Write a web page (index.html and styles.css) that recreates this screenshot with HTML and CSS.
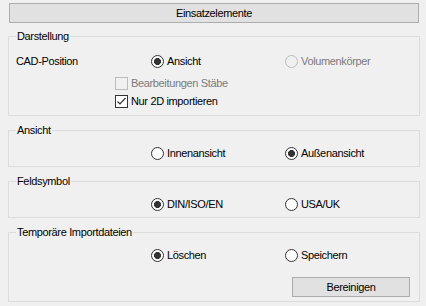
FILE: index.html
```html
<!DOCTYPE html>
<html lang="de">
<head>
    <meta charset="UTF-8">
    <meta name="viewport" content="width=device-width, initial-scale=1.0">
    <title>Import-Einstellungen</title>
    <link rel="stylesheet" href="styles.css">
</head>
<body>
    <button class="wide-btn">Einsatzelemente</button>

    <fieldset class="group group-view">
        <legend>Darstellung</legend>
        <div class="row">
            <span class="row-label">CAD-Position</span>
            <label class="opt"><span class="radio checked"></span>Ansicht</label>
            <label class="opt disabled"><span class="radio"></span>Volumenkörper</label>
        </div>
        <div class="row row-check row-gap">
            <label class="opt disabled"><span class="check"></span>Bearbeitungen Stäbe</label>
        </div>
        <div class="row row-check">
            <label class="opt"><span class="check checked">
                <svg width="11" height="11" viewBox="0 0 11 11"><polyline points="1.5,5.5 4,8 9.5,2" fill="none" stroke="#333" stroke-width="1.2"/></svg>
            </span>Nur 2D importieren</label>
        </div>
    </fieldset>

    <fieldset class="group">
        <legend>Ansicht</legend>
        <div class="row">
            <span></span>
            <label class="opt"><span class="radio"></span>Innenansicht</label>
            <label class="opt"><span class="radio checked"></span>Außenansicht</label>
        </div>
    </fieldset>

    <fieldset class="group">
        <legend>Feldsymbol</legend>
        <div class="row">
            <span></span>
            <label class="opt"><span class="radio checked"></span>DIN/ISO/EN</label>
            <label class="opt"><span class="radio"></span>USA/UK</label>
        </div>
    </fieldset>

    <fieldset class="group group-temp">
        <legend>Temporäre Importdateien</legend>
        <div class="row">
            <span></span>
            <label class="opt"><span class="radio checked"></span>Löschen</label>
            <label class="opt"><span class="radio"></span>Speichern</label>
        </div>
        <div class="row row-btn">
            <span></span>
            <span></span>
            <button class="small-btn">Bereinigen</button>
        </div>
    </fieldset>
</body>
</html>
```

FILE: styles.css
```css
body {
    margin: 0;
    padding: 3px 0 0 0;
    background: #f0f0f0;
    color: #000;
    font-family: 'Liberation Sans', Arial, sans-serif;
    font-size: 11px;
    letter-spacing: -0.35px;
}

button {
    font: inherit;
    letter-spacing: inherit;
    color: #000;
    background: #e1e1e1;
    border: 1px solid #adadad;
    border-radius: 0;
    padding: 0;
    height: 20px;
}
.wide-btn {
    display: block;
    width: 410px;
    margin: 0 0 0 9px;
}

/* group boxes */
.group {
    margin: 6px 6px 0 8px;
    padding: 7px 7px 4px 7px;
    border: 1px solid #dcdcdc;
    min-width: 0;
}
.group legend {
    padding: 0 1px;
    line-height: 14px;
}
.group-view {
    padding-top: 9px;
    padding-bottom: 5px;
}
.group + .group {
    margin-top: 7px;
}

.row {
    display: grid;
    grid-template-columns: 135px 134px 1fr;
    align-items: center;
    height: 18px;
}
.row-check {
    display: flex;
    padding-left: 99px;
}
.row-gap {
    margin-top: 4px;
}
.row-btn {
    height: 20px;
    margin-top: 13px;
}
.small-btn {
    width: 118px;
    margin-left: 7px;
}

.opt {
    display: flex;
    align-items: center;
    white-space: nowrap;
}
.opt.disabled {
    color: #7a7a7a;
}

.radio {
    width: 11px;
    height: 11px;
    border: 1px solid #333;
    border-radius: 50%;
    background: #fff;
    margin-right: 3px;
    flex: none;
}
.radio.checked {
    background: radial-gradient(circle, #333 3.2px, #fff 3.8px);
}
.disabled .radio {
    border-color: #bcbcbc;
    background: #f0f0f0;
}

.check {
    width: 11px;
    height: 11px;
    border: 1px solid #333;
    background: #fff;
    margin-right: 3px;
    flex: none;
    display: flex;
}
.disabled .check {
    border-color: #bcbcbc;
    background: #f0f0f0;
}
```
